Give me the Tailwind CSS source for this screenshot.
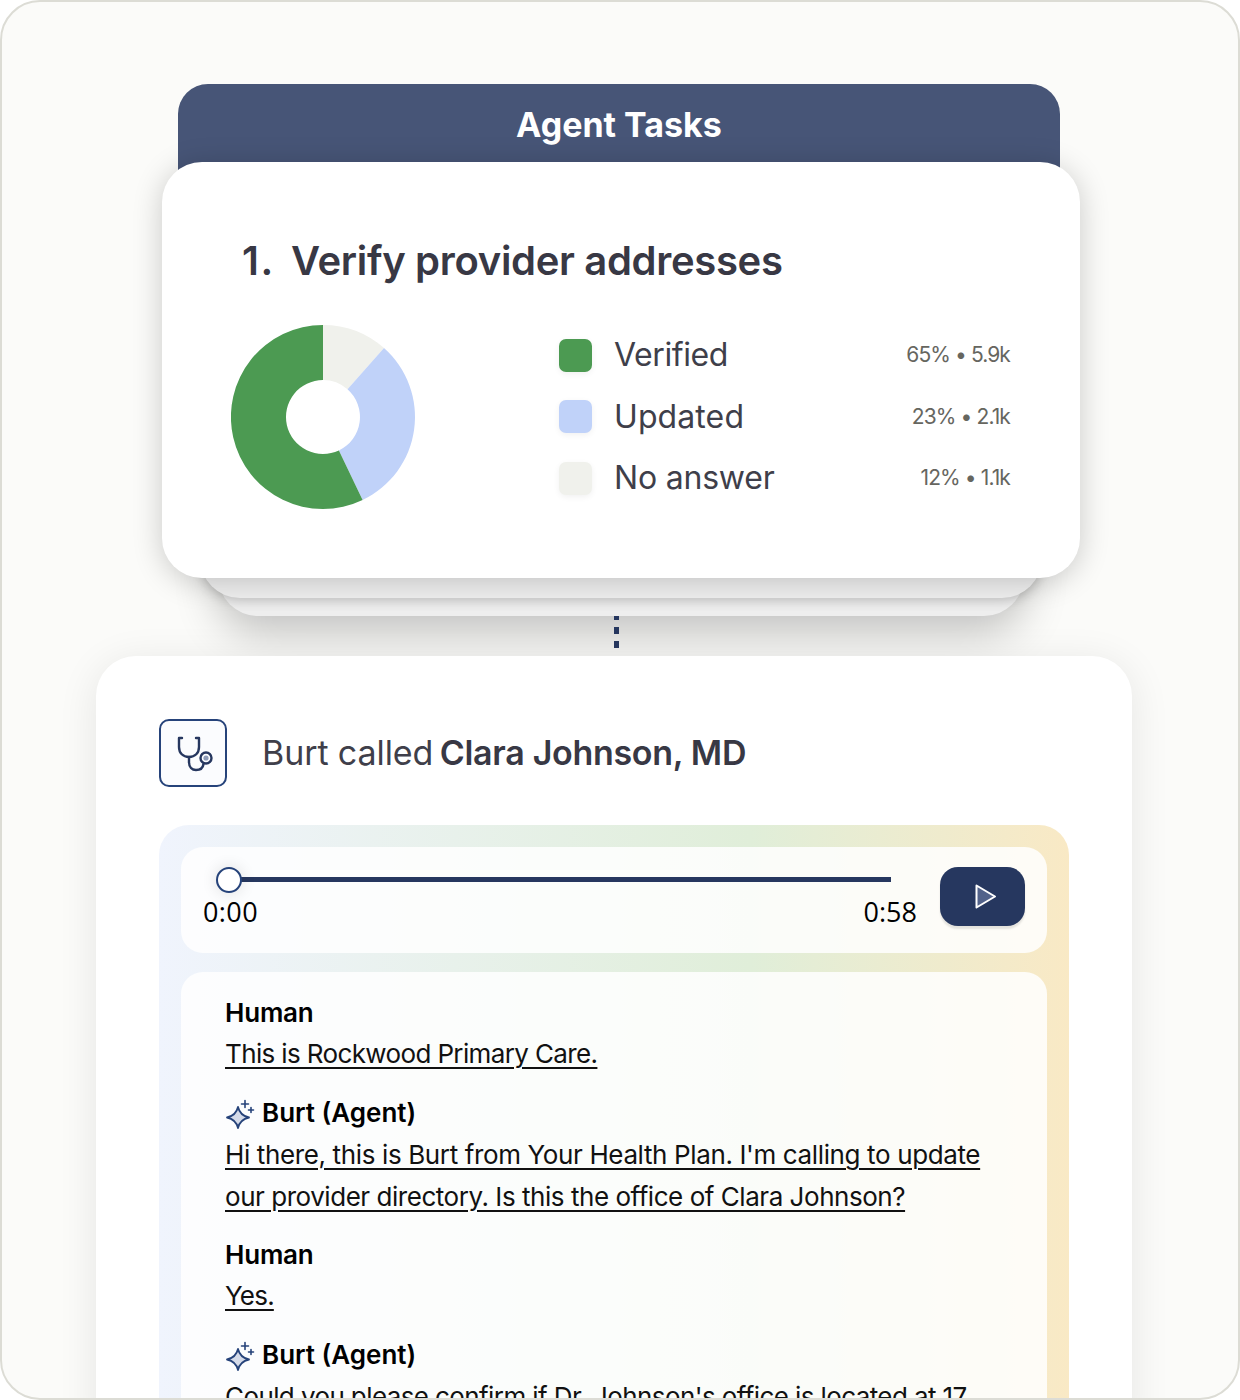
<!DOCTYPE html>
<html lang="en">
<head>
  <meta charset="UTF-8">
  <title>Agent Tasks</title>
  <script src="https://cdn.jsdelivr.net/npm/@tailwindcss/browser@4"></script>
</head>
<body class="bg-white">
  <div class="w-[1240px] h-[1400px] overflow-hidden rounded-[40px] border-2 border-[#dcdcd5] bg-[#fbfbf9] font-['Inter',sans-serif] pt-[82px]">

    <!-- task stack -->
    <div class="relative w-[918px] ml-[160px]">
      <div class="absolute left-[56px] right-[56px] top-[300px] h-[232px] rounded-[40px] bg-[#eeeeee] shadow-[0_16px_44px_rgba(0,0,0,0.24)]"></div>
      <div class="absolute left-[38px] right-[38px] top-[300px] h-[214px] rounded-[40px] bg-[#f0f0f0] shadow-[0_2px_12px_rgba(0,0,0,0.2)]"></div>
      <div class="relative ml-[16px] mr-[20px] h-[110px] rounded-t-[30px] bg-[#475577] text-center text-[34px] leading-[82px] font-bold text-white">Agent Tasks</div>
      <div class="relative -mt-[32px] h-[416px] rounded-[40px] bg-white shadow-[0_4px_30px_rgba(0,0,0,0.2)] pt-[71px]">
        <h1 class="pl-[80px] flex text-[40px] leading-[56px] font-semibold text-[#383844] tracking-[-0.32px]"><span class="w-[49px] tracking-[1.5px]">1.</span><span>Verify provider addresses</span></h1>
        <div class="flex mt-[36px] pl-[69px] pr-[70px] items-start">
          <svg class="shrink-0" width="184" height="184" viewBox="-92 -92 184 184">
            <path d="M0 -92A92 92 0 0 1 61 -68.9L24.5 -27.7A37 37 0 0 0 0 -37Z" fill="#f0f1ec"/>
            <path d="M61 -68.9A92 92 0 0 1 39.6 83L15.9 33.4A37 37 0 0 0 24.5 -27.7Z" fill="#c0d2f9"/>
            <path d="M39.6 83A92 92 0 1 1 0 -92L0 -37A37 37 0 1 0 15.9 33.4Z" fill="#4c9a52"/>
          </svg>
          <div class="ml-[144px] flex-1 flex flex-col gap-[27.5px] pt-[13px]">
            <div class="flex items-center h-[34px]">
              <span class="w-[33px] h-[33px] rounded-[7px] bg-[#4c9a52] shadow-[0_2px_6px_rgba(0,0,0,0.06)]"></span>
              <span class="ml-[22px] flex-1 text-[32px] text-[#3f3f4a] tracking-[-0.4px]">Verified</span>
              <span class="text-[21px] text-[#66665f] tracking-[-0.9px]">65% • 5.9k</span>
            </div>
            <div class="flex items-center h-[34px]">
              <span class="w-[33px] h-[33px] rounded-[7px] bg-[#c0d2f9] shadow-[0_2px_6px_rgba(0,0,0,0.06)]"></span>
              <span class="ml-[22px] flex-1 text-[32px] text-[#3f3f4a] tracking-[0.1px]">Updated</span>
              <span class="text-[21px] text-[#66665f] tracking-[-0.9px]">23% • 2.1k</span>
            </div>
            <div class="flex items-center h-[34px]">
              <span class="w-[33px] h-[33px] rounded-[7px] bg-[#f0f1ec] shadow-[0_2px_6px_rgba(0,0,0,0.06)]"></span>
              <span class="ml-[22px] flex-1 text-[32px] text-[#3f3f4a] tracking-[-0.2px]">No answer</span>
              <span class="text-[21px] text-[#66665f] tracking-[-0.9px]">12% • 1.1k</span>
            </div>
          </div>
        </div>
      </div>
    </div>

    <!-- connector -->
    <div class="relative ml-[612px] mt-[38px] h-[40px] w-[5px] flex flex-col gap-[7px]">
      <span class="block h-[4px] bg-[#26375f]"></span>
      <span class="block h-[7px] bg-[#26375f]"></span>
      <span class="block h-[7px] bg-[#26375f]"></span>
    </div>

    <!-- call card -->
    <div class="relative ml-[94px] w-[1036px] h-[800px] rounded-[40px] bg-white shadow-[0_6px_40px_rgba(0,0,0,0.09)] pt-[63px] pl-[63px]">
      <div class="flex items-center">
        <div class="w-[68px] h-[68px] rounded-[10px] border-2 border-[#26437a] bg-[#fbfcfe] flex items-center justify-center">
          <svg width="40" height="40" viewBox="0 0 40 40" fill="none" stroke="#26375f" stroke-width="2.4" stroke-linecap="round" stroke-linejoin="round">
            <path d="M9 5H6V14C6 20 10 24 16 24C22 24 26 20 26 14V5H23"/>
            <path d="M16 24V29C16 34 19 37 23 37C27 37 30 35 30.500 31"/>
            <circle cx="33" cy="25" r="5.500"/>
            <circle cx="33" cy="25" r="2.600" fill="#8f9cb8" stroke="none"/>
          </svg>
        </div>
        <p class="ml-[35px] pb-[2px] text-[34px] text-[#3f3f4a] tracking-[-0.1px]">Burt called <b class="font-semibold text-[#383844] tracking-[-0.3px] -ml-[3px]">Clara Johnson, MD</b></p>
      </div>

      <div class="mt-[38px] w-[910px] h-[700px] rounded-[30px] bg-gradient-to-r from-[#f0f4fd] via-[#e0eed9] via-65% to-[#f9e9c5] p-[22px]">
        <div class="h-[106px] rounded-[22px] bg-white/85 flex pl-[22px] pr-[22px]">
          <div class="relative w-[714px]">
            <span class="absolute left-[37px] right-[26px] top-[30px] h-[5px] bg-[#26375f]"></span>
            <span class="absolute left-[13px] top-[20px] w-[26px] h-[26px] rounded-full bg-white border-2 border-[#26437a] shadow-[0_0_16px_rgba(0,0,0,0.12)]"></span>
            <div class="absolute left-0 right-0 top-[48px] flex justify-between text-[27px] leading-[34px] text-black font-['Open_Sans',sans-serif]">
              <span class="tracking-[0.4px]">0:00</span><span>0:58</span>
            </div>
          </div>
          <button class="ml-[23px] mt-[20px] w-[85px] h-[59px] rounded-[18px] bg-[#26375f] shadow-[0_3px_2px_rgba(0,0,0,0.1)] flex items-center justify-center">
            <svg width="28" height="28" viewBox="0 0 28 28"><path d="M7.500 2.500L26 13.500L7.500 24.500Z" fill="#52628a" stroke="#fff" stroke-width="2" stroke-linejoin="round"/></svg>
          </button>
        </div>

        <div class="mt-[19px] h-[600px] rounded-[22px] bg-white/85 pl-[44px] pt-[20px] text-[26px] text-[#111]">
          <p class="font-semibold leading-[41px] text-black tracking-[-0.2px]">Human</p>
          <p class="leading-[42px] underline underline-offset-[4px] decoration-[1.5px] tracking-[-0.63px]">This is Rockwood Primary Care.</p>
          <p class="mt-[17px] font-semibold leading-[42px] text-black flex items-center">
            <svg class="ml-[1px] mr-[7px] overflow-visible" width="29" height="29" viewBox="0 0 29 29"><path d="M12 8Q14 16.500 23 18.500Q14 20.500 12 29Q10 20.500 1 18.500Q10 16.500 12 8Z" fill="#d5dbe9" stroke="#26437a" stroke-width="1.800" stroke-linejoin="round"/><path d="M19 1.500V8.500M15.500 5H22.500M25 8.500V13.500M22.500 11H27.500" stroke="#26437a" stroke-width="1.600" stroke-linecap="round"/></svg>
            Burt (Agent)
          </p>
          <p class="leading-[42px] underline underline-offset-[4px] decoration-[1.5px]"><span class="tracking-[-0.37px]">Hi there, this is Burt from Your Health Plan. I'm calling to update</span><br><span class="tracking-[-0.46px]">our provider directory. Is this the office of Clara Johnson?</span></p>
          <p class="mt-[16px] font-semibold leading-[41px] text-black tracking-[-0.2px]">Human</p>
          <p class="leading-[42px] underline underline-offset-[4px] decoration-[1.5px] tracking-[-0.8px]">Yes.</p>
          <p class="mt-[17px] font-semibold leading-[42px] text-black flex items-center">
            <svg class="ml-[1px] mr-[7px] overflow-visible" width="29" height="29" viewBox="0 0 29 29"><path d="M12 8Q14 16.500 23 18.500Q14 20.500 12 29Q10 20.500 1 18.500Q10 16.500 12 8Z" fill="#d5dbe9" stroke="#26437a" stroke-width="1.800" stroke-linejoin="round"/><path d="M19 1.500V8.500M15.500 5H22.500M25 8.500V13.500M22.500 11H27.500" stroke="#26437a" stroke-width="1.600" stroke-linecap="round"/></svg>
            Burt (Agent)
          </p>
          <p class="leading-[42px] underline underline-offset-[4px] decoration-[1.5px] tracking-[-0.6px]">Could you please confirm if Dr. Johnson's office is located at 17</p>
        </div>
      </div>
    </div>
  </div>
</body>
</html>
